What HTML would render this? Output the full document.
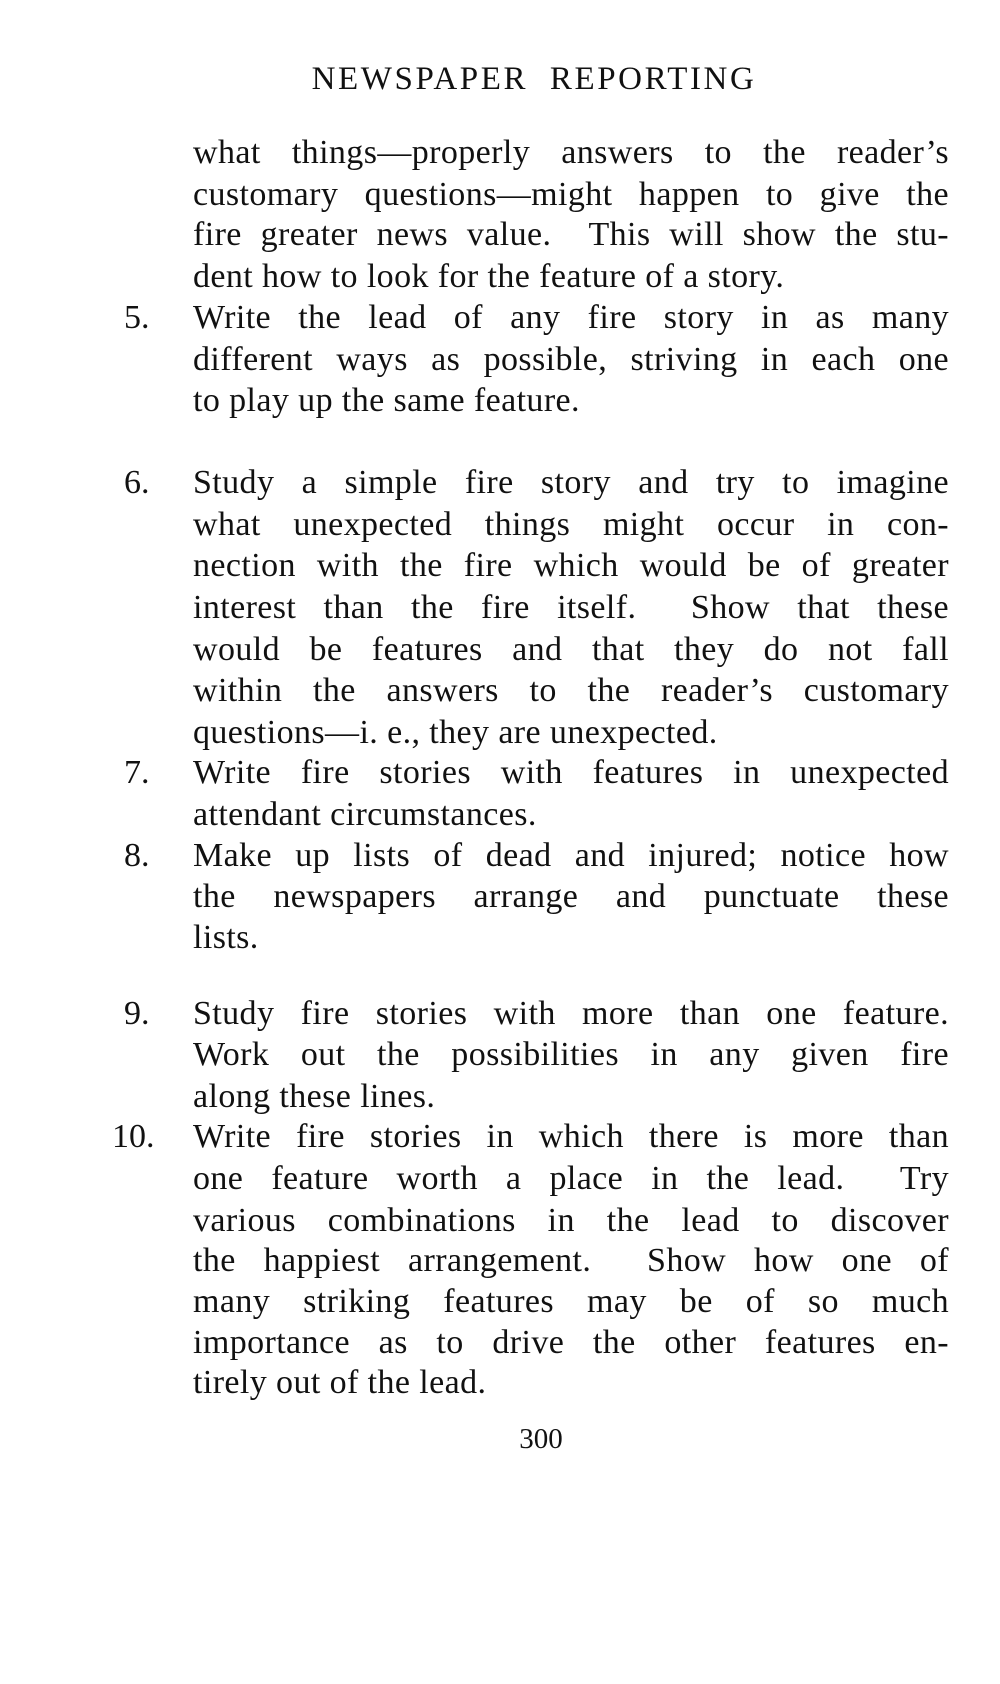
<!DOCTYPE html>
<html><head><meta charset="utf-8"><style>
html,body{margin:0;padding:0;background:#fff;}
body{width:1000px;height:1684px;position:relative;overflow:hidden;font-family:"Liberation Serif",serif;color:#111;}
.l{position:absolute;left:193px;width:756px;font-size:34px;letter-spacing:0.4px;line-height:41px;height:41px;text-align:justify;text-align-last:justify;white-space:nowrap;}
.l.e{text-align-last:left;}
.n{position:absolute;left:124px;font-size:34px;line-height:41px;}
.h{position:absolute;top:61px;left:34px;width:1000px;text-align:center;font-size:33px;letter-spacing:2.6px;line-height:36px;}
.p{position:absolute;top:1423px;left:41px;width:1000px;text-align:center;font-size:29px;line-height:32px;}
</style></head><body>
<div class="h">NEWSPAPER&nbsp; REPORTING</div>
<div class="l" style="top:132px">what things—properly answers to the reader’s</div>
<div class="l" style="top:174px">customary questions—might happen to give the</div>
<div class="l" style="top:214px">fire greater news value.&nbsp; This will show the stu-</div>
<div class="l e" style="top:256px">dent how to look for the feature of a story.</div>
<div class="n" style="top:297px">5.</div>
<div class="l" style="top:297px">Write the lead of any fire story in as many</div>
<div class="l" style="top:339px">different ways as possible, striving in each one</div>
<div class="l e" style="top:380px">to play up the same feature.</div>
<div class="n" style="top:462px">6.</div>
<div class="l" style="top:462px">Study a simple fire story and try to imagine</div>
<div class="l" style="top:504px">what unexpected things might occur in con-</div>
<div class="l" style="top:545px">nection with the fire which would be of greater</div>
<div class="l" style="top:587px">interest than the fire itself.&nbsp; Show that these</div>
<div class="l" style="top:629px">would be features and that they do not fall</div>
<div class="l" style="top:670px">within the answers to the reader’s customary</div>
<div class="l e" style="top:712px">questions—i. e., they are unexpected.</div>
<div class="n" style="top:752px">7.</div>
<div class="l" style="top:752px">Write fire stories with features in unexpected</div>
<div class="l e" style="top:794px">attendant circumstances.</div>
<div class="n" style="top:835px">8.</div>
<div class="l" style="top:835px">Make up lists of dead and injured; notice how</div>
<div class="l" style="top:876px">the newspapers arrange and punctuate these</div>
<div class="l e" style="top:917px">lists.</div>
<div class="n" style="top:993px">9.</div>
<div class="l" style="top:993px">Study fire stories with more than one feature.</div>
<div class="l" style="top:1034px">Work out the possibilities in any given fire</div>
<div class="l e" style="top:1076px">along these lines.</div>
<div class="n" style="top:1116px;left:112px">10.</div>
<div class="l" style="top:1116px">Write fire stories in which there is more than</div>
<div class="l" style="top:1158px">one feature worth a place in the lead.&nbsp; Try</div>
<div class="l" style="top:1200px">various combinations in the lead to discover</div>
<div class="l" style="top:1240px">the happiest arrangement.&nbsp; Show how one of</div>
<div class="l" style="top:1281px">many striking features may be of so much</div>
<div class="l" style="top:1322px">importance as to drive the other features en-</div>
<div class="l e" style="top:1362px">tirely out of the lead.</div>
<div class="p">300</div>
</body></html>
